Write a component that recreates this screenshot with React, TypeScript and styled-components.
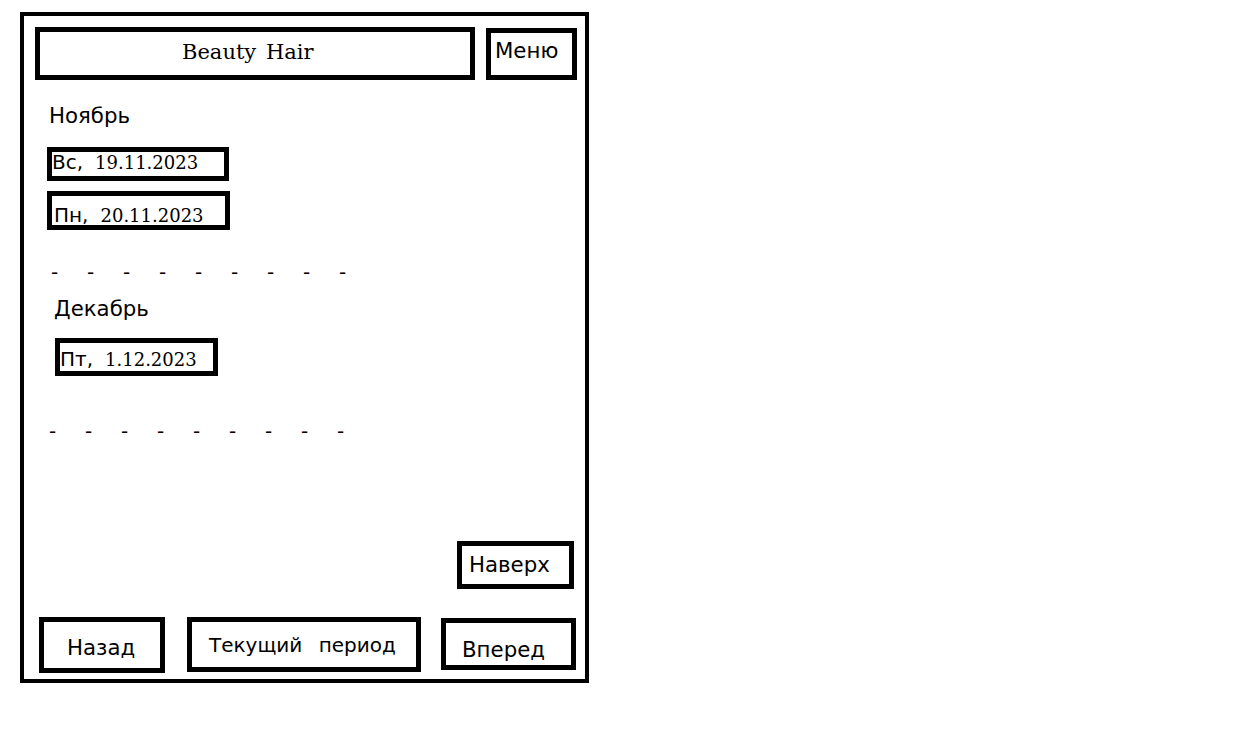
import React from "react";
import styled, { createGlobalStyle } from "styled-components";

const Global = createGlobalStyle`
  html, body { margin: 0; padding: 0; background: #fff; }
  body { font-family: "DejaVu Sans", sans-serif; color: #000; }
`;

const SANS = `"DejaVu Sans", "Noto Sans", sans-serif`;
const SERIF = `"DejaVu Serif", "Liberation Serif", serif`;

const Frame = styled.div`
  box-sizing: border-box;
  margin: 12px 0 0 20px;
  width: 569px;
  height: 671px;
  border: 4px solid #000;
  display: flex;
  flex-direction: column;
  align-items: flex-start;
`;

const Header = styled.header`
  display: flex;
  align-items: flex-start;
  gap: 11px;
  margin: 11px 0 0 11px;
`;

const Box = styled.div`
  box-sizing: border-box;
  border: 5px solid #000;
  background: #fff;
  white-space: pre;
`;

const Title = styled(Box)`
  width: 440px;
  height: 53px;
  padding: 8px 0 0 142px;
  font-family: ${SERIF};
  font-size: 21px;
  line-height: 24px;
  word-spacing: 3px;
`;

const MenuButton = styled(Box)`
  width: 91px;
  height: 52px;
  margin-top: 1px;
  padding: 6px 0 0 4px;
  font-family: ${SANS};
  font-size: 21.3px;
  line-height: 24px;
`;

const Month = styled.div<{ $left: number; $top: number }>`
  margin: ${(p) => p.$top}px 0 0 ${(p) => p.$left}px;
  font-family: ${SANS};
  font-size: 21.3px;
  line-height: 24px;
`;

const DateBox = styled(Box)<{
  $left: number;
  $top: number;
  $w: number;
  $h: number;
  $padTop: number;
  $padLeft: number;
}>`
  margin: ${(p) => p.$top}px 0 0 ${(p) => p.$left}px;
  width: ${(p) => p.$w}px;
  height: ${(p) => p.$h}px;
  padding: ${(p) => p.$padTop}px 0 0 ${(p) => p.$padLeft}px;
  line-height: 20px;
`;

const Day = styled.span`
  font-family: ${SANS};
  font-size: 20px;
`;

const DateText = styled.span`
  font-family: ${SERIF};
  font-size: 18px;
  margin-left: 12px;
`;

const DashRow = styled.div<{ $left: number; $top: number }>`
  display: flex;
  margin: ${(p) => p.$top}px 0 0 ${(p) => p.$left}px;
  font-family: ${SANS};
  font-size: 20px;
  line-height: 24px;
`;

const Dash = styled.span`
  width: 36px;
`;

const UpButton = styled(Box)`
  align-self: flex-end;
  margin: 98px 11px 0 0;
  width: 117px;
  height: 48px;
  padding: 7px 0 0 7px;
  font-family: ${SANS};
  font-size: 21.3px;
  line-height: 24px;
`;

const Footer = styled.footer`
  display: flex;
  align-items: flex-start;
  margin: 28px 0 0 15px;
`;

const NavButton = styled(Box)<{
  $w: number;
  $h: number;
  $padTop: number;
  $padLeft: number;
  $gap: number;
  $top?: number;
  $size?: number;
  $wordGap?: number;
}>`
  width: ${(p) => p.$w}px;
  height: ${(p) => p.$h}px;
  margin: ${(p) => p.$top ?? 0}px 0 0 ${(p) => p.$gap}px;
  padding: ${(p) => p.$padTop}px 0 0 ${(p) => p.$padLeft}px;
  font-family: ${SANS};
  font-size: ${(p) => p.$size ?? 21.3}px;
  line-height: 24px;
  word-spacing: ${(p) => p.$wordGap ?? 0}px;
`;

const dashes = Array.from({ length: 9 });

export default function App() {
  return (
    <>
      <Global />
      <Frame>
        <Header>
          <Title>Beauty Hair</Title>
          <MenuButton>Меню</MenuButton>
        </Header>

        <Month $left={25} $top={24}>Ноябрь</Month>
        <DateBox $left={23} $top={19} $w={182} $h={34} $padTop={0} $padLeft={0}>
          <Day>Вс,</Day>
          <DateText>19.11.2023</DateText>
        </DateBox>
        <DateBox $left={23} $top={10} $w={183} $h={39} $padTop={9} $padLeft={2}>
          <Day>Пн,</Day>
          <DateText>20.11.2023</DateText>
        </DateBox>

        <DashRow $left={27} $top={30}>
          {dashes.map((_, i) => (
            <Dash key={i}>-</Dash>
          ))}
        </DashRow>

        <Month $left={30} $top={13}>Декабрь</Month>
        <DateBox $left={31} $top={17} $w={163} $h={38} $padTop={6} $padLeft={0}>
          <Day>Пт,</Day>
          <DateText>1.12.2023</DateText>
        </DateBox>

        <DashRow $left={25} $top={43}>
          {dashes.map((_, i) => (
            <Dash key={i}>-</Dash>
          ))}
        </DashRow>

        <UpButton>Наверх</UpButton>

        <Footer>
          <NavButton $w={126} $h={56} $padTop={14} $padLeft={23} $gap={0}>
            Назад
          </NavButton>
          <NavButton
            $w={234}
            $h={55}
            $padTop={11}
            $padLeft={17}
            $gap={22}
            $size={20}
            $wordGap={10}
          >
            Текущий период
          </NavButton>
          <NavButton $w={135} $h={52} $padTop={15} $padLeft={16} $gap={20} $top={1}>
            Вперед
          </NavButton>
        </Footer>
      </Frame>
    </>
  );
}
